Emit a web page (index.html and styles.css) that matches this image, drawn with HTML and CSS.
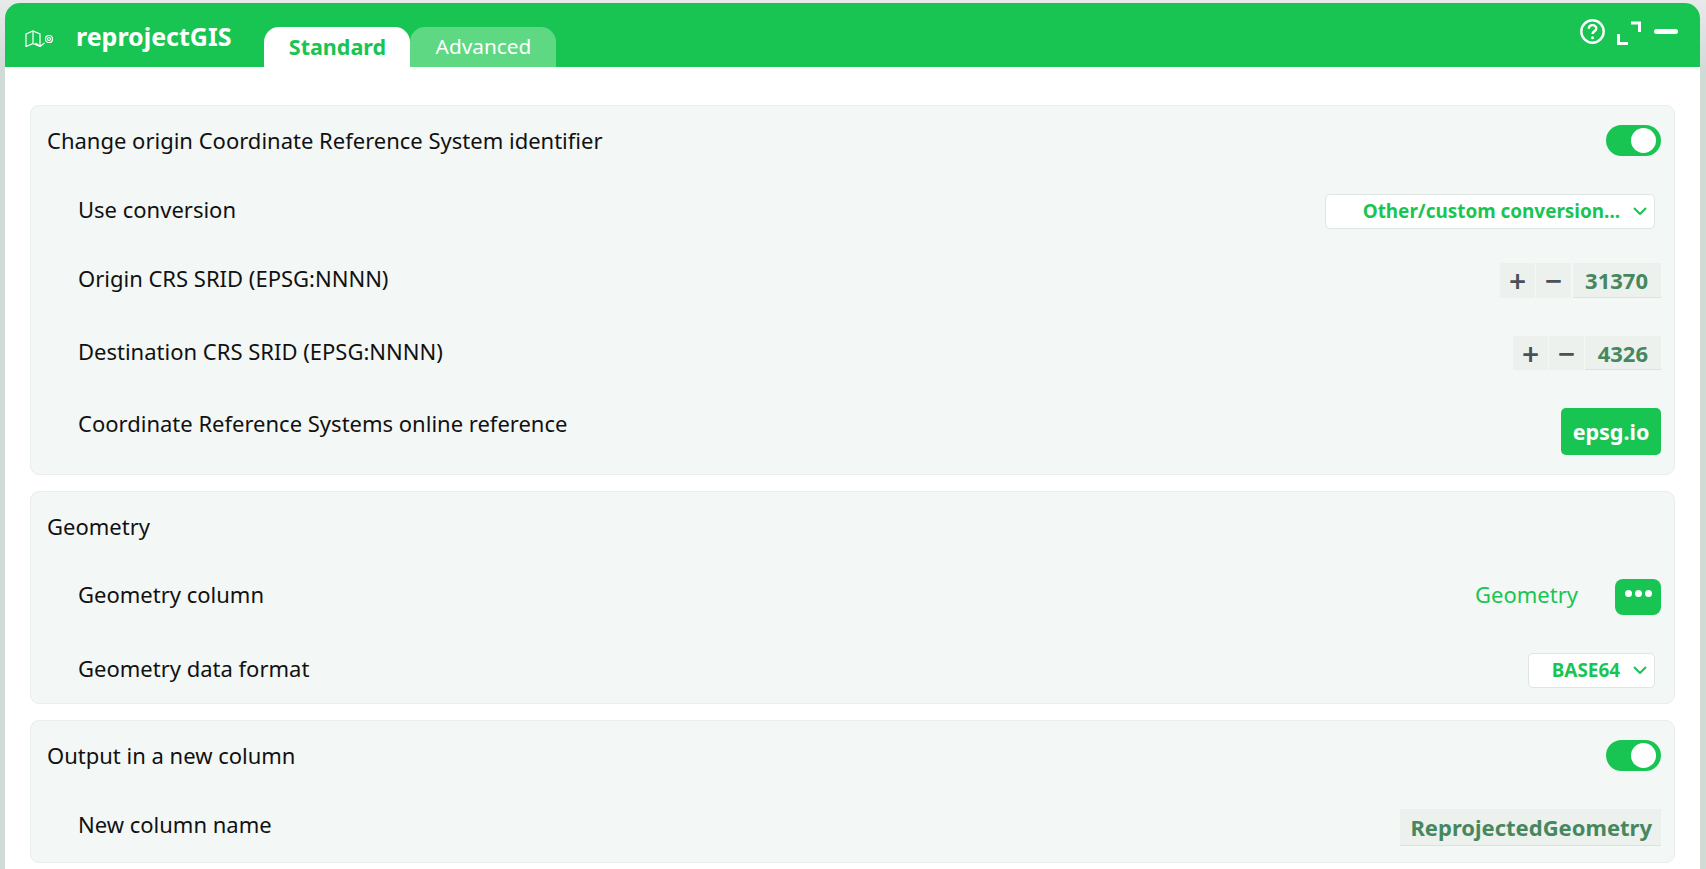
FILE: index.html
```html
<!DOCTYPE html>
<html lang="en">

<head>
  <meta charset="UTF-8" />
  <meta name="viewport" content="width=device-width, initial-scale=1" />
  <title>reprojectGIS</title>
  <link rel="stylesheet" href="styles.css">
</head>

<body>

  <div class="window">
    <header class="topbar">
      <svg class="logo" viewBox="0 0 28 17" aria-hidden="true">
        <path d="M1 4 8 1v12.500L1 16.500zM8 1l7 3v12.500M8 13.500l7 3M10.500 13l4.500 3.500 4.500-3.500" />
        <circle cx="24" cy="9" r="3.500" />
        <circle cx="24" cy="9" r="1.500" />
      </svg>
      <span class="app-name">reprojectGIS</span>
      <nav class="tabs">
        <a class="tab tab-active">Standard</a>
        <a class="tab">Advanced</a>
      </nav>
      <div class="win-buttons">
        <svg class="icon-help" viewBox="0 0 25 25" aria-hidden="true">
          <circle cx="12.500" cy="12.500" r="11.200" />
          <path d="M8.800 9.800c0-2.300 1.700-3.700 3.800-3.700s3.700 1.400 3.700 3.300c0 2.900-3.800 2.700-3.800 5.600" />
          <circle class="dot" cx="12.500" cy="18.800" r="1.500" />
        </svg>
        <svg class="icon-full" viewBox="0 0 24 24" aria-hidden="true">
          <path d="M14 2h8.500v9M1.500 13v9.500H11" />
        </svg>
        <span class="icon-min"></span>
      </div>
    </header>

    <main class="content">
      <section class="card">
        <div class="row">
          <span class="label">Change origin Coordinate Reference System identifier</span>
          <span class="toggle"></span>
        </div>
        <div class="row sub">
          <span class="label">Use conversion</span>
          <div class="select">
            <span class="select-text">Other/custom conversion...</span>
            <svg class="chevron" viewBox="0 0 14 8" aria-hidden="true"><path d="M1 1l6 6 6-6" /></svg>
          </div>
        </div>
        <div class="row sub near">
          <span class="label">Origin CRS SRID (EPSG:NNNN)</span>
          <div class="stepper">
            <button class="step">+</button>
            <button class="step">−</button>
            <span class="value value-num wide">31370</span>
          </div>
        </div>
        <div class="row sub">
          <span class="label">Destination CRS SRID (EPSG:NNNN)</span>
          <div class="stepper">
            <button class="step">+</button>
            <button class="step">−</button>
            <span class="value value-num">4326</span>
          </div>
        </div>
        <div class="row sub last-big">
          <span class="label">Coordinate Reference Systems online reference</span>
          <button class="btn-link">epsg.io</button>
        </div>
      </section>

      <section class="card">
        <div class="row">
          <span class="label">Geometry</span>
        </div>
        <div class="row sub">
          <span class="label">Geometry column</span>
          <div class="picker">
            <span class="picker-text">Geometry</span>
            <button class="btn-dots"><i></i><i></i><i></i></button>
          </div>
        </div>
        <div class="row sub">
          <span class="label">Geometry data format</span>
          <div class="select select-short">
            <span class="select-text">BASE64</span>
            <svg class="chevron" viewBox="0 0 14 8" aria-hidden="true"><path d="M1 1l6 6 6-6" /></svg>
          </div>
        </div>
      </section>

      <section class="card">
        <div class="row">
          <span class="label">Output in a new column</span>
          <span class="toggle"></span>
        </div>
        <div class="row sub">
          <span class="label">New column name</span>
          <span class="value value-text">ReprojectedGeometry</span>
        </div>
      </section>
    </main>
  </div>

</body>

</html>
```

FILE: styles.css
```css
* {
  margin: 0;
  padding: 0;
  box-sizing: border-box;
}

html,
body {
  height: 100%;
  overflow: hidden;
}

body {
  font-family: "Noto Sans", sans-serif;
  background: linear-gradient(#e8eae9, #d0dbd6 70px);
  color: #111;
  padding: 3px 6px 0 5px;
}

.window {
  background: #fff;
  border-radius: 15px 15px 0 0;
  height: 100%;
}

/* barra verde */
.topbar {
  background: #19c552;
  border-radius: 15px 15px 0 0;
  height: 64px;
  display: flex;
  align-items: flex-start;
  color: #fff;
}

.logo {
  width: 28px;
  height: 17px;
  margin: 27px 0 0 20px;
  fill: none;
  stroke: #fff;
  stroke-width: 1.200;
}

.app-name {
  font-size: 25px;
  font-weight: 700;
  line-height: 30px;
  margin: 18px 0 0 23px;
}

.tabs {
  display: flex;
  margin: 24px 0 0 33px;
}

.tab {
  width: 146px;
  height: 40px;
  border-radius: 15px 15px 0 0;
  background: #5fd884;
  color: #fff;
  font-size: 20.800px;
  line-height: 39px;
  text-align: center;
}

.tab-active {
  background: #fff;
  color: #19c552;
  font-size: 21.500px;
  font-weight: 700;
}

.win-buttons {
  margin-left: auto;
  display: flex;
  align-items: flex-start;
  padding: 15px 22px 0 0;
}

.icon-help {
  width: 25px;
  height: 25px;
  fill: none;
  stroke: #fff;
  stroke-width: 2.400;
  margin-top: 1px;
}

.icon-help .dot {
  fill: #fff;
  stroke: none;
}

.icon-full {
  width: 24px;
  height: 24px;
  margin: 3px 0 0 12px;
  fill: none;
  stroke: #fff;
  stroke-width: 3;
}

.icon-min {
  width: 24px;
  height: 5px;
  margin: 11px 0 0 13px;
  border-radius: 3px;
  background: #fff;
}

.content {
  padding: 38px 25px 0;
}

.card {
  background: #f3f7f5;
  border: 1px solid #e8eeea;
  border-radius: 9px;
  padding: 19px 13px 15.500px 16px;
  margin-bottom: 16px;
}

.row {
  display: flex;
  justify-content: space-between;
  align-items: flex-start;
  margin-top: 38px;
}

.row:first-child {
  margin-top: 0;
}

.sub {
  padding-left: 31px;
}

.near {
  margin-top: 34.500px;
}

.last-big {
  margin-bottom: 3.500px;
}

.label {
  font-size: 22px;
  line-height: 30px;
}

.toggle {
  display: block;
  position: relative;
  width: 55px;
  height: 31px;
  border-radius: 16px;
  background: #19c552;
}

.toggle::after {
  content: "";
  position: absolute;
  top: 3px;
  right: 5px;
  width: 25px;
  height: 25px;
  border-radius: 50%;
  background: #fff;
}

.select {
  display: flex;
  align-items: center;
  height: 34.500px;
  margin-right: 6px;
  padding: 0 7px 0 24px;
  background: #fff;
  border: 1px solid #dde6e1;
  border-radius: 5px;
  color: #19c552;
  font-size: 18.900px;
  font-weight: 700;
}

.select-short {
  padding-left: 10px;
}

.select-text {
  margin: 0 13px;
}

.chevron {
  width: 14px;
  height: 8px;
  fill: none;
  stroke: #19c552;
  stroke-width: 2;
}

.stepper {
  display: flex;
  gap: 1px;
}

.step {
  width: 35px;
  height: 34.500px;
  padding-top: 2px;
  border: none;
  background: #ecf1ee;
  color: #4a5058;
  font: 600 30px/32px "Noto Sans", sans-serif;
}

.value {
  display: block;
  background: #ecf1ee;
  border-bottom: 1px solid #dbe3de;
  color: #47875f;
  font-size: 22px;
  font-weight: 700;
  text-align: right;
}

.value-num {
  width: 76px;
  height: 34.500px;
  line-height: 34px;
  padding-right: 13px;
}

.value-num.wide {
  width: 88px;
  margin-left: 1px;
}

.value-text {
  width: 261px;
  height: 37px;
  line-height: 37px;
  padding-right: 9px;
}

.btn-link {
  width: 100px;
  height: 47px;
  border: none;
  border-radius: 5px;
  background: #19c552;
  color: #fff;
  font: 700 21.500px "Noto Sans", sans-serif;
}

.picker {
  display: flex;
  align-items: flex-start;
}

.picker-text {
  color: #19c552;
  font-size: 22px;
  line-height: 30px;
}

.btn-dots {
  display: flex;
  justify-content: center;
  gap: 3px;
  width: 46px;
  height: 36px;
  margin-left: 37px;
  padding-top: 11px;
  border: none;
  border-radius: 8px;
  background: #19c552;
}

.btn-dots i {
  width: 7px;
  height: 7px;
  border-radius: 50%;
  background: #fff;
}
```
